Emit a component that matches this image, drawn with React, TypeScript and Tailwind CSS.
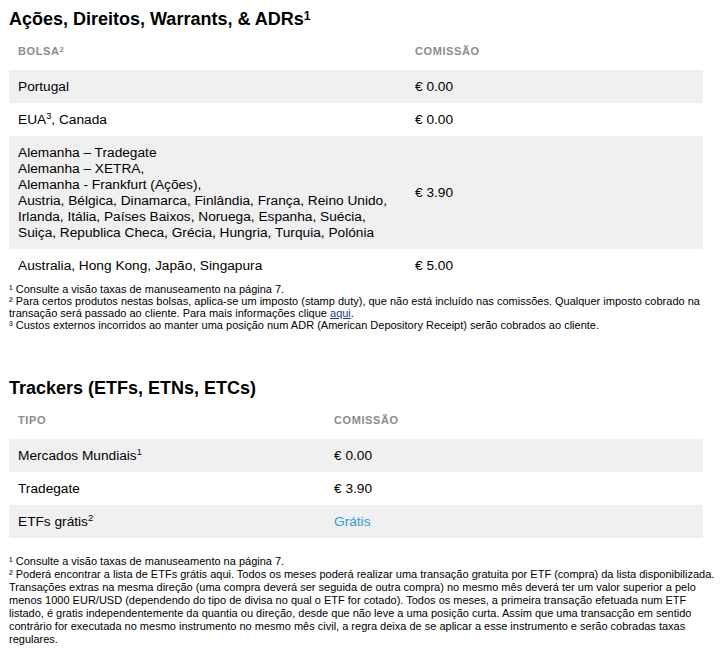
type Row = {
  label: React.ReactNode;
  value: React.ReactNode;
};

const sans = "font-['Liberation_Sans',Arial,sans-serif]";

function Sup({ children }: { children: React.ReactNode }) {
  return <sup className="-top-[0.45em] text-[0.68em] leading-none">{children}</sup>;
}

function FeeTable({ head, rows, firstCol }: { head: [React.ReactNode, string]; rows: Row[]; firstCol: string }) {
  const th = 'px-[9px] pt-[14px] pb-[12px] text-left align-top text-[11px] font-bold uppercase leading-[14px] tracking-[0.6px] text-[#8c8c8c]';
  const td = 'px-[9px] py-[8.5px] align-middle text-[13.7px] leading-[16px] text-black';
  return (
    <table className="w-full border-collapse">
      <thead>
        <tr>
          <th className={`${firstCol} ${th}`}>{head[0]}</th>
          <th className={th}>{head[1]}</th>
        </tr>
      </thead>
      <tbody>
        {rows.map((row, i) => (
          <tr key={i} className={i % 2 === 0 ? 'bg-[#f0f0f0]' : 'bg-white'}>
            <td className={td}>{row.label}</td>
            <td className={td}>{row.value}</td>
          </tr>
        ))}
      </tbody>
    </table>
  );
}

const stockRows: Row[] = [
  { label: 'Portugal', value: '€ 0.00' },
  {
    label: (
      <>
        EUA<Sup>3</Sup>, Canada
      </>
    ),
    value: '€ 0.00',
  },
  {
    label: (
      <>
        Alemanha – Tradegate
        <br />
        Alemanha – XETRA,
        <br />
        Alemanha - Frankfurt (Ações),
        <br />
        Austria, Bélgica, Dinamarca, Finlândia, França, Reino Unido,
        <br />
        Irlanda, Itália, Países Baixos, Noruega, Espanha, Suécia,
        <br />
        Suiça, Republica Checa, Grécia, Hungria, Turquia, Polónia
      </>
    ),
    value: '€ 3.90',
  },
  { label: 'Australia, Hong Kong, Japão, Singapura', value: '€ 5.00' },
];

const trackerRows: Row[] = [
  {
    label: (
      <>
        Mercados Mundiais<Sup>1</Sup>
      </>
    ),
    value: '€ 0.00',
  },
  { label: 'Tradegate', value: '€ 3.90' },
  {
    label: (
      <>
        ETFs grátis<Sup>2</Sup>
      </>
    ),
    value: <span className="text-[#2a9dd6]">Grátis</span>,
  },
];

export default function App() {
  return (
    <div className={`${sans} min-h-[652px] w-[722px] bg-white pl-[9px] pr-[19px] pt-[8px] text-black`}>
      <section>
        <h2 className="text-[18px] font-bold leading-[22px]">
          Ações, Direitos, Warrants, &amp; ADRs<Sup>1</Sup>
        </h2>
        <FeeTable head={[<>Bolsa<Sup>2</Sup></>, 'Comissão']} rows={stockRows} firstCol="w-[397px]" />
        <div className="whitespace-nowrap pt-[1px] text-[11px] leading-[12px]">
          ¹ Consulte a visão taxas de manuseamento na página 7.
          <br />
          ² Para certos produtos nestas bolsas, aplica-se um imposto (stamp duty), que não está incluído nas comissões. Qualquer imposto cobrado na
          <br />
          transação será passado ao cliente. Para mais informações clique{' '}
          <a className="text-[#1a3c8f] underline">aqui</a>.
          <br />
          ³ Custos externos incorridos ao manter uma posição num ADR (American Depository Receipt) serão cobrados ao cliente.
        </div>
      </section>

      <section className="pt-[46px]">
        <h2 className="text-[18px] font-bold leading-[22px]">Trackers (ETFs, ETNs, ETCs)</h2>
        <FeeTable head={['Tipo', 'Comissão']} rows={trackerRows} firstCol="w-[316px]" />
        <div className="whitespace-nowrap pt-[17px] text-[11px] leading-[13px]">
          ¹ Consulte a visão taxas de manuseamento na página 7.
          <br />
          ² Poderá encontrar a lista de ETFs grátis aqui. Todos os meses poderá realizar uma transação gratuita por ETF (compra) da lista disponibilizada.
          <br />
          Transações extras na mesma direção (uma compra deverá ser seguida de outra compra) no mesmo mês deverá ter um valor superior a pelo
          <br />
          menos 1000 EUR/USD (dependendo do tipo de divisa no qual o ETF for cotado). Todos os meses, a primeira transação efetuada num ETF
          <br />
          listado, é gratis independentemente da quantia ou direção, desde que não leve a uma posição curta. Assim que uma transacção em sentido
          <br />
          contrário for executada no mesmo instrumento no mesmo mês civil, a regra deixa de se aplicar a esse instrumento e serão cobradas taxas
          <br />
          regulares.
        </div>
      </section>
    </div>
  );
}
